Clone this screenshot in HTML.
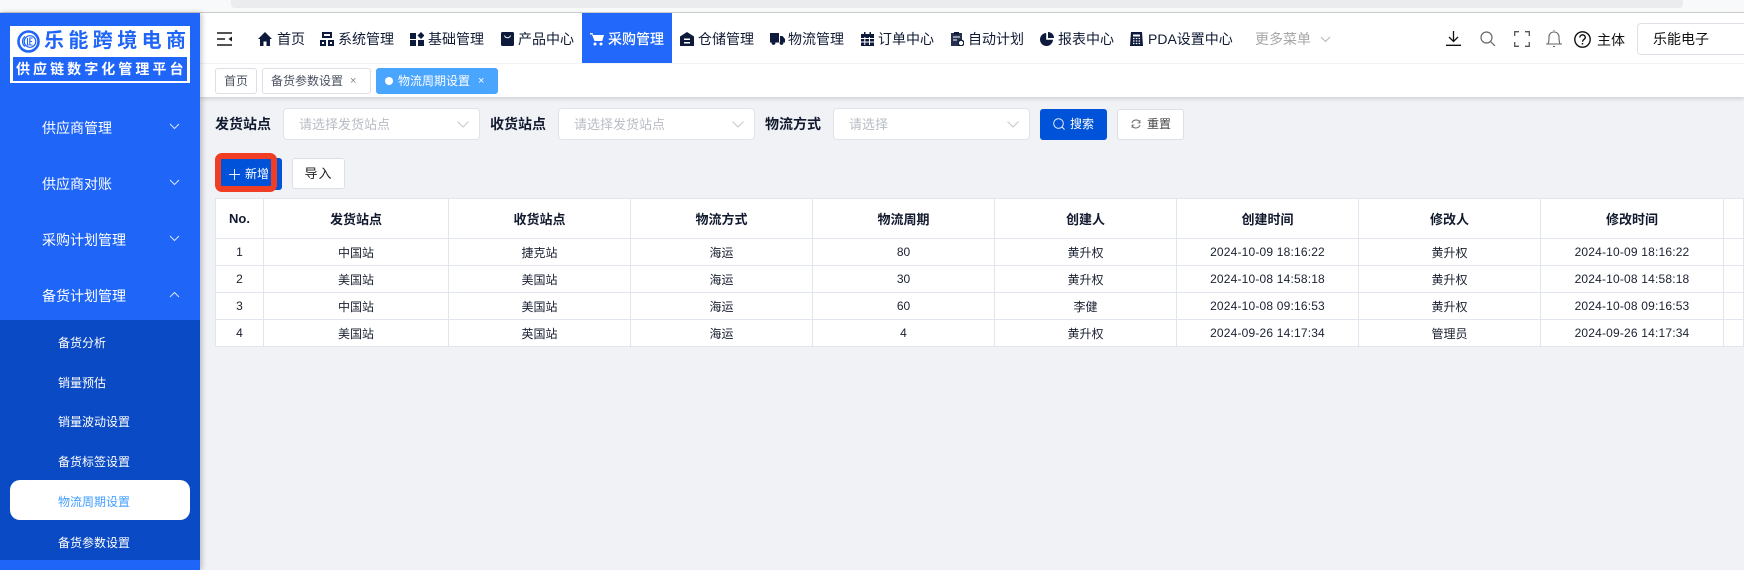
<!DOCTYPE html>
<html lang="zh"><head><meta charset="utf-8"><title>物流周期设置</title>
<style>
*{box-sizing:border-box;margin:0;padding:0}
html,body{width:1744px;height:570px;overflow:hidden;background:#f0f2f6;font-family:"Liberation Sans","Noto Sans CJK SC",sans-serif;color:#111a2e;font-size:14px}
.a{position:absolute;white-space:nowrap}
.t{position:absolute;white-space:nowrap;line-height:20px;height:20px}
svg{position:absolute;display:block}
.nav{color:#0f1a33;font-size:14px;top:29px}
.side{color:#fff;font-size:14px;left:42px}
.sub{color:#fff;font-size:12px;left:58px}
.tab{position:absolute;top:68px;height:26px;border:1px solid #dcdfe6;border-radius:3px;background:#fff;font-size:12px;line-height:25px;color:#495060;white-space:nowrap}
.inp{position:absolute;top:108px;width:197px;height:32px;background:#fff;border:1px solid #dfe3ea;border-radius:4px;color:#b8bcc4;font-size:13px;line-height:32px;padding-left:15px}
.lab{font-weight:700;font-size:14px;top:114px;color:#111a2e}
table{position:absolute;left:215px;top:198px;width:1529px;border-collapse:collapse;table-layout:fixed;background:#fff}
td,th{border:1px solid #e1e6ee;text-align:center;overflow:hidden;white-space:nowrap}
th{height:40px;font-size:13px;font-weight:700;color:#111a2e}
td{height:27px;font-size:12px;color:#1a2030}
td.d{letter-spacing:.18px}
</style></head><body>
<!-- browser strip -->
<div class="a" style="left:0;top:0;width:1744px;height:13px;background:#f8f9fa;border-bottom:1px solid #cfcfcf"></div>
<div class="a" style="left:231px;top:0;width:1452px;height:8px;background:#ebecee;border-radius:0 0 4px 4px"></div>

<!-- header -->
<div class="a" style="left:200px;top:13px;width:1544px;height:84px;background:#fff;box-shadow:0 2px 4px rgba(0,0,0,.14)"></div>
<div class="a" style="left:200px;top:63px;width:1544px;height:1px;background:#f2f3f5"></div>

<svg style="left:217px;top:32px" width="16" height="14" viewBox="0 0 16 14" fill="none" stroke="#1a1a1a" stroke-width="1.6"><path d="M0 1h15M0 7h8M0 13h15"/><path d="M15 4.5L11.5 7 15 9.500z" fill="#1a1a1a" stroke="none"/></svg>

<!-- nav icons -->
<svg style="left:258px;top:32px" width="14" height="14" viewBox="0 0 14 14" fill="#0d1a3c"><path d="M7 0L0 7h2v7h3.500V9.500h3V14H12V7h2z"/></svg>
<span class="t nav" style="left:277px">首页</span>
<svg style="left:320px;top:32px" width="14" height="14" viewBox="0 0 14 14" fill="#0d1a3c"><path fill-rule="evenodd" d="M2 0h10v6H2zM4 2v2h6V2zM0 8h6v6H0zM2 10v2h2v-2zM8 8h6v6H8zM10 10v2h2v-2z"/></svg>
<span class="t nav" style="left:338px">系统管理</span>
<svg style="left:410px;top:32px" width="14" height="14" viewBox="0 0 14 14" fill="#0d1a3c"><rect width="6" height="6" y="1"/><rect y="8" width="6" height="6"/><rect x="8" y="8" width="6" height="6"/><path d="M11 0l3.500 3.500L11 7 7.500 3.500z"/></svg>
<span class="t nav" style="left:428px">基础管理</span>
<svg style="left:501px;top:32px" width="13" height="14" viewBox="0 0 13 14"><rect width="13" height="14" rx="1.500" fill="#0d1a3c"/><path d="M3.500 3.500c1 3 5 3 6 0" stroke="#fff" fill="none"/></svg>
<span class="t nav" style="left:518px">产品中心</span>

<div class="a" style="left:582px;top:13px;width:90px;height:50px;background:#2268fb"></div>
<svg style="left:590px;top:32px" width="14" height="14" viewBox="0 0 14 14" fill="#fff"><path d="M0 1h2.500l.6 2H14l-1.800 6H4.500L2 2.500H0z"/><circle cx="5" cy="12" r="1.500"/><circle cx="11" cy="12" r="1.500"/></svg>
<span class="t" style="left:608px;top:29px;color:#fff;font-size:14px;font-weight:500">采购管理</span>

<svg style="left:680px;top:32px" width="14" height="14" viewBox="0 0 14 14"><path d="M7 0l7 4.500V14H0V4.500z" fill="#0d1a3c"/><path d="M4 6.500h6v1.500H4zM4 10h6v1.500H4z" fill="#fff"/></svg>
<span class="t nav" style="left:698px">仓储管理</span>
<svg style="left:770px;top:33px" width="15" height="12" viewBox="0 0 15 12" fill="#0d1a3c"><path d="M0 0h9v9.500H0zM10 3h2.500L15 6v3.500h-5z"/><circle cx="3.500" cy="10" r="1.900"/><circle cx="11.500" cy="10" r="1.900"/></svg>
<span class="t nav" style="left:788px">物流管理</span>
<svg style="left:861px;top:32px" width="13" height="14" viewBox="0 0 13 14" fill="#0d1a3c"><path d="M0 2h13v12H0z"/><path d="M3 0h1.500v3H3zM8.500 0H10v3H8.500z"/><path d="M3.800 5v8M8.500 5v8M0 6.500h13M0 10h13" stroke="#fff"/></svg>
<span class="t nav" style="left:878px">订单中心</span>
<svg style="left:951px;top:32px" width="13" height="14" viewBox="0 0 13 14"><path d="M0 1h11v13H0z" fill="#26304f"/><path d="M3 0h5v2.500H3z" fill="#0d1a3c"/><path d="M2 5h7M2 8h4" stroke="#fff"/><circle cx="10" cy="11" r="2.800" fill="#fff" stroke="#0d1a3c" stroke-width="1.300"/></svg>
<span class="t nav" style="left:968px">自动计划</span>
<svg style="left:1040px;top:32px" width="14" height="14" viewBox="0 0 14 14" fill="#0d1a3c"><path d="M6.200 1A6.500 6.500 0 1 0 13 7.800H6.200z"/><path d="M8 0a6 6 0 0 1 6 6H8z"/></svg>
<span class="t nav" style="left:1058px">报表中心</span>
<svg style="left:1130px;top:32px" width="13" height="14" viewBox="0 0 13 14"><path d="M1 0h11l1 14H0z" fill="#0d1a3c"/><path d="M3 2.500h7v2H3z" fill="#fff"/><path d="M3 6.500h1.500M5.800 6.500h1.500M8.600 6.500h1.500M3 9h1.500M5.800 9h1.500M8.600 9h1.500M3 11.500h1.500M5.800 11.500h1.500M8.600 11.500h1.500" stroke="#fff" stroke-width="1.200"/></svg>
<span class="t nav" style="left:1148px">PDA设置中心</span>
<span class="t" style="left:1255px;top:29px;color:#a9a6a6;font-size:14px">更多菜单</span>
<svg style="left:1320px;top:36px" width="11" height="7" viewBox="0 0 11 7" fill="none" stroke="#b5b5b5"><path d="M1 1l4.500 4.500L10 1"/></svg>

<!-- right icons -->
<svg style="left:1446px;top:31px" width="15" height="15" viewBox="0 0 15 15" fill="none" stroke="#111" stroke-width="1.300"><path d="M7.500 0v10M3 6l4.500 4.500L12 6M0 14.300h15"/></svg>
<svg style="left:1480px;top:31px" width="16" height="15" viewBox="0 0 16 15" fill="none" stroke="#666" stroke-width="1.200"><circle cx="6.500" cy="6.500" r="5.500"/><path d="M10.500 10.500L15 15"/></svg>
<svg style="left:1514px;top:31px" width="16" height="16" viewBox="0 0 16 16" fill="none" stroke="#555" stroke-width="1.300"><path d="M5 .7H.7V5M11 .7h4.300V5M.7 11v4.300H5M15.300 11v4.300H11"/></svg>
<svg style="left:1546px;top:30px" width="16" height="17" viewBox="0 0 16 17" fill="none" stroke="#666" stroke-width="1.100"><path d="M0 14h16M2 14c1-2 1-4 1-7 0-3 2-5 5-5s5 2 5 5c0 3 0 5 1 7"/><path d="M7 0h2M7 16.500h2"/></svg>
<svg style="left:1574px;top:31px" width="17" height="17" viewBox="0 0 17 17" fill="none" stroke="#111" stroke-width="1.400"><circle cx="8.500" cy="8.500" r="7.700"/><path d="M5.800 6.500c0-3.500 5.500-3.500 5.500 0 0 2-2.800 2-2.800 4.200"/><path d="M8.500 12v1.500"/></svg>
<span class="t" style="left:1597px;top:30px;font-size:14px;color:#111">主体</span>
<div class="a" style="left:1637px;top:23px;width:125px;height:32px;background:#fff;border:1px solid #dfe1e8;border-radius:4px"></div>
<span class="t" style="left:1653px;top:29px;font-size:14px;color:#111">乐能电子</span>

<!-- tabs -->
<div class="tab" style="left:215px;width:42px;text-align:center">首页</div>
<div class="tab" style="left:262px;width:109px;padding-left:8px">备货参数设置<span style="position:absolute;left:87px;top:0;color:#888;font-size:11px">×</span></div>
<div class="tab" style="left:376px;width:122px;background:#4aa5ff;border-color:#4aa5ff;color:#fff;padding-left:21px"><span style="position:absolute;left:8px;top:8px;width:8px;height:8px;border-radius:50%;background:#fff"></span>物流周期设置<span style="position:absolute;left:101px;top:0;font-size:11px">×</span></div>

<!-- sidebar -->
<div class="a" style="left:0;top:13px;width:200px;height:557px;background:#1f65f8;box-shadow:2px 0 5px rgba(0,0,0,.22)"></div>
<div class="a" style="left:10px;top:26px;width:180px;height:57px;background:#fff"></div>
<svg style="left:17px;top:30px" width="23" height="23" viewBox="0 0 23 23" fill="none" stroke="#1f65f8"><circle cx="11.500" cy="11.500" r="10" stroke-width="2.600"/><path d="M8 6.500a6.300 6.300 0 0 0 0 10" stroke-width="1.300"/><circle cx="13" cy="11.500" r="5.800" stroke-width="1.200"/><path d="M10.500 8v7h1.300M15.500 8H12.800v7h2.700M12.800 11.500h2.200" stroke-width="1.100"/></svg>
<span class="t" style="left:44px;top:29px;line-height:24px;height:24px;font-size:20px;font-weight:700;color:#1f65f8;letter-spacing:4.400px">乐能跨境电商</span>
<div class="a" style="left:13px;top:57px;width:174px;height:24px;background:#1f65f8"></div>
<span class="t" style="left:16px;top:59px;font-size:14px;font-weight:700;color:#fff;letter-spacing:3.050px">供应链数字化管理平台</span>

<span class="t side" style="top:118px">供应商管理</span>
<span class="t side" style="top:174px">供应商对账</span>
<span class="t side" style="top:230px">采购计划管理</span>
<span class="t side" style="top:286px">备货计划管理</span>
<svg style="left:169px;top:123px" width="11" height="7" viewBox="0 0 11 7" fill="none" stroke="#d8e5ff"><path d="M1 1l4.500 4.500L10 1"/></svg>
<svg style="left:169px;top:179px" width="11" height="7" viewBox="0 0 11 7" fill="none" stroke="#d8e5ff"><path d="M1 1l4.500 4.500L10 1"/></svg>
<svg style="left:169px;top:235px" width="11" height="7" viewBox="0 0 11 7" fill="none" stroke="#d8e5ff"><path d="M1 1l4.500 4.500L10 1"/></svg>
<svg style="left:169px;top:291px" width="11" height="7" viewBox="0 0 11 7" fill="none" stroke="#d8e5ff"><path d="M1 6l4.500-4.500L10 6"/></svg>
<div class="a" style="left:0;top:320px;width:200px;height:240px;background:#0a4ac4"></div>
<div class="a" style="left:10px;top:480px;width:180px;height:40px;background:#fff;border-radius:10px"></div>
<span class="t sub" style="top:333px">备货分析</span>
<span class="t sub" style="top:373px">销量预估</span>
<span class="t sub" style="top:412px">销量波动设置</span>
<span class="t sub" style="top:452px">备货标签设置</span>
<span class="t sub" style="top:492px;color:#409eff">物流周期设置</span>
<span class="t sub" style="top:533px">备货参数设置</span>

<!-- filters -->
<span class="t lab" style="left:215px">发货站点</span>
<div class="inp" style="left:283px">请选择发货站点</div>
<svg style="left:457px;top:121px" width="12" height="7" viewBox="0 0 12 7" fill="none" stroke="#c5c8ce"><path d="M.5.500L6 6l5.500-5.500"/></svg>
<span class="t lab" style="left:490px">收货站点</span>
<div class="inp" style="left:558px">请选择发货站点</div>
<svg style="left:732px;top:121px" width="12" height="7" viewBox="0 0 12 7" fill="none" stroke="#c5c8ce"><path d="M.5.500L6 6l5.500-5.500"/></svg>
<span class="t lab" style="left:765px">物流方式</span>
<div class="inp" style="left:833px">请选择</div>
<svg style="left:1007px;top:121px" width="12" height="7" viewBox="0 0 12 7" fill="none" stroke="#c5c8ce"><path d="M.5.500L6 6l5.500-5.500"/></svg>

<div class="a" style="left:1040px;top:109px;width:67px;height:31px;background:#0052d9;border-radius:3px"></div>
<svg style="left:1053px;top:118px" width="12" height="12" viewBox="0 0 12 12" fill="none" stroke="#fff" stroke-width=".9"><circle cx="5.500" cy="5.500" r="4.800"/><path d="M9 9l2.500 2.500"/></svg>
<span class="t" style="left:1070px;top:114px;color:#fff;font-size:12px">搜索</span>
<div class="a" style="left:1117px;top:109px;width:67px;height:31px;background:#fff;border:1px solid #dcdfe6;border-radius:3px"></div>
<svg style="left:1131px;top:119px" width="10" height="10" viewBox="0 0 10 10" fill="none" stroke="#666"><path d="M9 3.500A4.300 4.300 0 0 0 1 4M1 6.500A4.300 4.300 0 0 0 9 6"/><path d="M9 1v3H6.500M1 9V6h2.500" stroke-width=".7"/></svg>
<span class="t" style="left:1147px;top:114px;font-size:12px;color:#444">重置</span>

<!-- action buttons -->
<div class="a" style="left:220px;top:158px;width:62px;height:32px;background:#0052d9;border-radius:3px"></div>
<div class="a" style="left:215px;top:153px;width:62px;height:39px;border:6px solid #ef3e24;border-radius:7px;background:#0052d9"></div>
<svg style="left:229px;top:169px" width="11" height="11" viewBox="0 0 11 11" stroke="#e6efff" stroke-width="1"><path d="M5.500 0v11M0 5.500h11"/></svg>
<span class="t" style="left:245px;top:164px;color:#fff;font-size:12px">新增</span>
<div class="a" style="left:292px;top:158px;width:53px;height:31px;background:#fff;border:1px solid #dcdfe6;border-radius:3px;text-align:center;font-size:13px;line-height:29px;color:#222;letter-spacing:1px">导入</div>

<!-- table -->
<table>
<colgroup><col style="width:48px"><col style="width:185px"><col style="width:182px"><col style="width:182px"><col style="width:182px"><col style="width:182px"><col style="width:182px"><col style="width:182px"><col style="width:183px"><col></colgroup>
<tr><th>No.</th><th>发货站点</th><th>收货站点</th><th>物流方式</th><th>物流周期</th><th>创建人</th><th>创建时间</th><th>修改人</th><th>修改时间</th><th></th></tr>
<tr><td>1</td><td>中国站</td><td>捷克站</td><td>海运</td><td>80</td><td>黄升权</td><td class="d">2024-10-09 18:16:22</td><td>黄升权</td><td class="d">2024-10-09 18:16:22</td><td></td></tr>
<tr><td>2</td><td>美国站</td><td>美国站</td><td>海运</td><td>30</td><td>黄升权</td><td class="d">2024-10-08 14:58:18</td><td>黄升权</td><td class="d">2024-10-08 14:58:18</td><td></td></tr>
<tr><td>3</td><td>中国站</td><td>美国站</td><td>海运</td><td>60</td><td>李健</td><td class="d">2024-10-08 09:16:53</td><td>黄升权</td><td class="d">2024-10-08 09:16:53</td><td></td></tr>
<tr><td>4</td><td>美国站</td><td>英国站</td><td>海运</td><td>4</td><td>黄升权</td><td class="d">2024-09-26 14:17:34</td><td>管理员</td><td class="d">2024-09-26 14:17:34</td><td></td></tr>
</table>
</body></html>
